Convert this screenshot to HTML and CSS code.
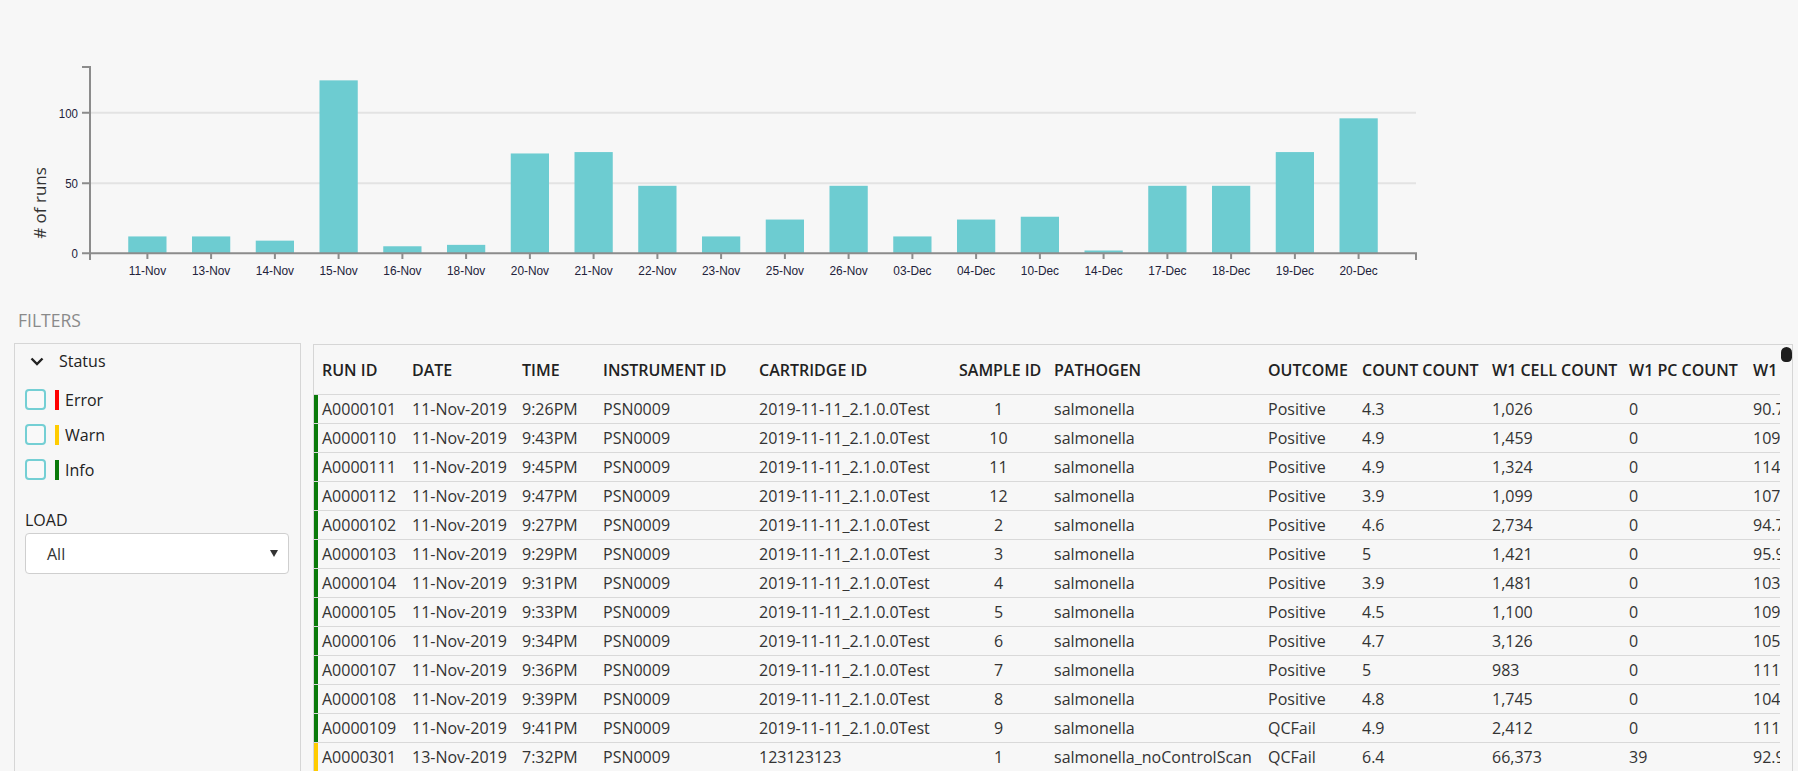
FILE: index.html
```html
<!DOCTYPE html>
<html>
<head>
<meta charset="utf-8">
<title>Runs</title>
<link rel="stylesheet" href="styles.css">
</head>
<body>
<div class="page">
  <svg class="chart" width="1798" height="300" viewBox="0 0 1798 300">
    <g class="grid">
      <line x1="90" y1="112.7" x2="1416" y2="112.7"/>
      <line x1="90" y1="183.3" x2="1416" y2="183.3"/>
    </g>
    <g class="bars">
      <rect x="128.25" y="236.43" width="38.25" height="16.87"/>
      <rect x="192" y="236.43" width="38.25" height="16.87"/>
      <rect x="255.75" y="240.65" width="38.25" height="12.65"/>
      <rect x="319.5" y="80.36" width="38.25" height="172.94"/>
      <rect x="383.25" y="246.27" width="38.25" height="7.03"/>
      <rect x="447" y="244.86" width="38.25" height="8.44"/>
      <rect x="510.75" y="153.47" width="38.25" height="99.83"/>
      <rect x="574.5" y="152.07" width="38.25" height="101.23"/>
      <rect x="638.25" y="185.81" width="38.25" height="67.49"/>
      <rect x="702" y="236.43" width="38.25" height="16.87"/>
      <rect x="765.75" y="219.56" width="38.25" height="33.74"/>
      <rect x="829.5" y="185.81" width="38.25" height="67.49"/>
      <rect x="893.25" y="236.43" width="38.25" height="16.87"/>
      <rect x="957" y="219.56" width="38.25" height="33.74"/>
      <rect x="1020.75" y="216.74" width="38.25" height="36.56"/>
      <rect x="1084.5" y="250.49" width="38.25" height="2.81"/>
      <rect x="1148.25" y="185.81" width="38.25" height="67.49"/>
      <rect x="1212" y="185.81" width="38.25" height="67.49"/>
      <rect x="1275.75" y="152.07" width="38.25" height="101.23"/>
      <rect x="1339.5" y="118.32" width="38.25" height="134.98"/>
    </g>
    <g class="axis">
      <path d="M82,67 H90 V253.3 H82"/>
      <path d="M82,112.7 H90 M82,183.3 H90"/>
      <path d="M90,260 V253.3 H1416 V260"/>
      <path d="M147.4,253.3 V259 M211.1,253.3 V259 M274.9,253.3 V259 M338.6,253.3 V259 M402.4,253.3 V259 M466.1,253.3 V259 M529.9,253.3 V259 M593.6,253.3 V259 M657.4,253.3 V259 M721.1,253.3 V259 M784.9,253.3 V259 M848.6,253.3 V259 M912.4,253.3 V259 M976.1,253.3 V259 M1039.9,253.3 V259 M1103.6,253.3 V259 M1167.4,253.3 V259 M1231.1,253.3 V259 M1294.9,253.3 V259 M1358.6,253.3 V259"/>
    </g>
    <g class="ylabels">
      <text transform="translate(78,117.5) scale(0.85,1)">100</text>
      <text transform="translate(78,188.1) scale(0.85,1)">50</text>
      <text transform="translate(78,258.1) scale(0.85,1)">0</text>
    </g>
    <g class="xlabels">
      <text transform="translate(147.4,274.8) scale(0.88,1)">11-Nov</text>
      <text transform="translate(211.1,274.8) scale(0.88,1)">13-Nov</text>
      <text transform="translate(274.9,274.8) scale(0.88,1)">14-Nov</text>
      <text transform="translate(338.6,274.8) scale(0.88,1)">15-Nov</text>
      <text transform="translate(402.4,274.8) scale(0.88,1)">16-Nov</text>
      <text transform="translate(466.1,274.8) scale(0.88,1)">18-Nov</text>
      <text transform="translate(529.9,274.8) scale(0.88,1)">20-Nov</text>
      <text transform="translate(593.6,274.8) scale(0.88,1)">21-Nov</text>
      <text transform="translate(657.4,274.8) scale(0.88,1)">22-Nov</text>
      <text transform="translate(721.1,274.8) scale(0.88,1)">23-Nov</text>
      <text transform="translate(784.9,274.8) scale(0.88,1)">25-Nov</text>
      <text transform="translate(848.6,274.8) scale(0.88,1)">26-Nov</text>
      <text transform="translate(912.4,274.8) scale(0.88,1)">03-Dec</text>
      <text transform="translate(976.1,274.8) scale(0.88,1)">04-Dec</text>
      <text transform="translate(1039.9,274.8) scale(0.88,1)">10-Dec</text>
      <text transform="translate(1103.6,274.8) scale(0.88,1)">14-Dec</text>
      <text transform="translate(1167.4,274.8) scale(0.88,1)">17-Dec</text>
      <text transform="translate(1231.1,274.8) scale(0.88,1)">18-Dec</text>
      <text transform="translate(1294.9,274.8) scale(0.88,1)">19-Dec</text>
      <text transform="translate(1358.6,274.8) scale(0.88,1)">20-Dec</text>
    </g>
    <text class="ytitle" transform="translate(45.5,203) rotate(-90)"># of runs</text>
  </svg>

  <div class="filters-title">FILTERS</div>

  <div class="main">
    <aside class="sidebar">
      <div class="group-head">
        <svg class="chevron" width="14" height="9" viewBox="0 0 14 9"><polyline points="1.5,1.5 7,7 12.5,1.5"/></svg>
        <span>Status</span>
      </div>
      <ul class="status-list">
        <li class="status-item"><span class="checkbox"></span><span class="swatch swatch-error"></span><span>Error</span></li>
        <li class="status-item"><span class="checkbox"></span><span class="swatch swatch-warn"></span><span>Warn</span></li>
        <li class="status-item"><span class="checkbox"></span><span class="swatch swatch-info"></span><span>Info</span></li>
      </ul>
      <div class="load-label">LOAD</div>
      <div class="select"><span>All</span><span class="caret"></span></div>
    </aside>

    <section class="table-panel">
      <div class="table-scroll">
        <table class="runs">
          <colgroup>
            <col class="c-run"><col class="c-date"><col class="c-time"><col class="c-inst"><col class="c-cart"><col class="c-sample"><col class="c-path"><col class="c-out"><col class="c-count"><col class="c-cell"><col class="c-pc"><col class="c-w1">
          </colgroup>
          <thead>
            <tr><th>RUN ID</th><th>DATE</th><th>TIME</th><th>INSTRUMENT ID</th><th>CARTRIDGE ID</th><th class="center">SAMPLE ID</th><th>PATHOGEN</th><th>OUTCOME</th><th>COUNT COUNT</th><th>W1 CELL COUNT</th><th>W1 PC COUNT</th><th>W1 MEAN INTENSITY</th></tr>
          </thead>
          <tbody>
            <tr class="info"><td>A0000101</td><td>11-Nov-2019</td><td>9:26PM</td><td>PSN0009</td><td>2019-11-11_2.1.0.0Test</td><td class="center">1</td><td>salmonella</td><td>Positive</td><td>4.3</td><td>1,026</td><td>0</td><td>90.75</td></tr>
            <tr class="info"><td>A0000110</td><td>11-Nov-2019</td><td>9:43PM</td><td>PSN0009</td><td>2019-11-11_2.1.0.0Test</td><td class="center">10</td><td>salmonella</td><td>Positive</td><td>4.9</td><td>1,459</td><td>0</td><td>109.32</td></tr>
            <tr class="info"><td>A0000111</td><td>11-Nov-2019</td><td>9:45PM</td><td>PSN0009</td><td>2019-11-11_2.1.0.0Test</td><td class="center">11</td><td>salmonella</td><td>Positive</td><td>4.9</td><td>1,324</td><td>0</td><td>114.08</td></tr>
            <tr class="info"><td>A0000112</td><td>11-Nov-2019</td><td>9:47PM</td><td>PSN0009</td><td>2019-11-11_2.1.0.0Test</td><td class="center">12</td><td>salmonella</td><td>Positive</td><td>3.9</td><td>1,099</td><td>0</td><td>107.21</td></tr>
            <tr class="info"><td>A0000102</td><td>11-Nov-2019</td><td>9:27PM</td><td>PSN0009</td><td>2019-11-11_2.1.0.0Test</td><td class="center">2</td><td>salmonella</td><td>Positive</td><td>4.6</td><td>2,734</td><td>0</td><td>94.71</td></tr>
            <tr class="info"><td>A0000103</td><td>11-Nov-2019</td><td>9:29PM</td><td>PSN0009</td><td>2019-11-11_2.1.0.0Test</td><td class="center">3</td><td>salmonella</td><td>Positive</td><td>5</td><td>1,421</td><td>0</td><td>95.93</td></tr>
            <tr class="info"><td>A0000104</td><td>11-Nov-2019</td><td>9:31PM</td><td>PSN0009</td><td>2019-11-11_2.1.0.0Test</td><td class="center">4</td><td>salmonella</td><td>Positive</td><td>3.9</td><td>1,481</td><td>0</td><td>103.44</td></tr>
            <tr class="info"><td>A0000105</td><td>11-Nov-2019</td><td>9:33PM</td><td>PSN0009</td><td>2019-11-11_2.1.0.0Test</td><td class="center">5</td><td>salmonella</td><td>Positive</td><td>4.5</td><td>1,100</td><td>0</td><td>109.16</td></tr>
            <tr class="info"><td>A0000106</td><td>11-Nov-2019</td><td>9:34PM</td><td>PSN0009</td><td>2019-11-11_2.1.0.0Test</td><td class="center">6</td><td>salmonella</td><td>Positive</td><td>4.7</td><td>3,126</td><td>0</td><td>105.62</td></tr>
            <tr class="info"><td>A0000107</td><td>11-Nov-2019</td><td>9:36PM</td><td>PSN0009</td><td>2019-11-11_2.1.0.0Test</td><td class="center">7</td><td>salmonella</td><td>Positive</td><td>5</td><td>983</td><td>0</td><td>111.37</td></tr>
            <tr class="info"><td>A0000108</td><td>11-Nov-2019</td><td>9:39PM</td><td>PSN0009</td><td>2019-11-11_2.1.0.0Test</td><td class="center">8</td><td>salmonella</td><td>Positive</td><td>4.8</td><td>1,745</td><td>0</td><td>104.55</td></tr>
            <tr class="info"><td>A0000109</td><td>11-Nov-2019</td><td>9:41PM</td><td>PSN0009</td><td>2019-11-11_2.1.0.0Test</td><td class="center">9</td><td>salmonella</td><td>QCFail</td><td>4.9</td><td>2,412</td><td>0</td><td>111.09</td></tr>
            <tr class="warn"><td>A0000301</td><td>13-Nov-2019</td><td>7:32PM</td><td>PSN0009</td><td>123123123</td><td class="center">1</td><td>salmonella_noControlScan</td><td>QCFail</td><td>6.4</td><td>66,373</td><td>39</td><td>92.95</td></tr>
            <tr class="warn"><td>A0000302</td><td>13-Nov-2019</td><td>7:35PM</td><td>PSN0009</td><td>123123123</td><td class="center">2</td><td>salmonella_noControlScan</td><td>QCFail</td><td>6.1</td><td>61,208</td><td>41</td><td>93.40</td></tr>
          </tbody>
        </table>
      </div>
      <div class="scroll-thumb"></div>
    </section>
  </div>
</div>
</body>
</html>
```

FILE: styles.css
```css
html, body {
  margin: 0;
  padding: 0;
  height: 771px;
  overflow: hidden;
  background: #f7f7f7;
}

body {
  font-family: "Open Sans", "Liberation Sans", sans-serif;
  font-size: 16px;
  color: #333;
}

.page {
  width: 1798px;
}

/* ---------- chart ---------- */
.chart {
  display: block;
}

.chart .grid line {
  stroke: #e3e3e3;
  stroke-width: 2;
}

.chart .bars rect {
  fill: #6dccd1;
}

.chart .axis path {
  fill: none;
  stroke: #8c8c8c;
  stroke-width: 2;
}

.chart text {
  font-family: "Liberation Sans", Arial, sans-serif;
  fill: #22223a;
}

.chart .ylabels text {
  font-size: 13.5px;
  text-anchor: end;
}

.chart .xlabels text {
  font-size: 13.5px;
  text-anchor: middle;
}

.chart .ytitle {
  font-family: "Open Sans", "Liberation Sans", sans-serif;
  font-size: 17px;
  text-anchor: middle;
  fill: #333;
}

/* ---------- filters title ---------- */
.filters-title {
  font-size: 17.5px;
  line-height: 24px;
  color: #8a8a8a;
  padding: 8px 0 11px 18px;
}

/* ---------- main area ---------- */
.main {
  display: flex;
  align-items: flex-start;
  gap: 12px;
  padding: 0 5px 0 14px;
}

.sidebar {
  flex: none;
  width: 287px;
  height: 480px;
  box-sizing: border-box;
  border: 1px solid #d6d6d6;
  padding: 0 11px 0 10px;
  color: #222;
}

.group-head {
  display: flex;
  align-items: center;
  height: 34px;
  padding-left: 5px;
}

.chevron {
  flex: none;
  margin-right: 15px;
}

.chevron polyline {
  fill: none;
  stroke: #222;
  stroke-width: 2.4;
}

.status-list {
  list-style: none;
  margin: 4px 0 0;
  padding: 0;
}

.status-item {
  display: flex;
  align-items: center;
  height: 35px;
}

.checkbox {
  flex: none;
  width: 17px;
  height: 17px;
  border: 2px solid #74cfd4;
  border-radius: 4px;
  background: #f9f9f9;
}

.swatch {
  flex: none;
  width: 4px;
  height: 20px;
  margin: 0 6px 0 9px;
}

.swatch-error { background: #ff0000; }
.swatch-warn { background: #ffcc00; }
.swatch-info { background: #0a7a0a; }

.load-label {
  margin-top: 22px;
  line-height: 22px;
}

.select {
  margin-top: 2px;
  height: 39px;
  display: flex;
  align-items: center;
  border: 1px solid #cfcfcf;
  border-radius: 4px;
  background: #fff;
  padding: 0 10px 0 21px;
  color: #333;
}

.caret {
  margin-left: auto;
  width: 0;
  height: 0;
  border-left: 4px solid transparent;
  border-right: 4px solid transparent;
  border-top: 7px solid #333;
}

/* ---------- table ---------- */
.table-panel {
  flex: 1;
  position: relative;
  height: 440px;
  margin-top: 1px;
  border: 1px solid #d6d6d6;
  padding-right: 12px;
  overflow: hidden;
}

.table-scroll {
  overflow: hidden;
  height: 100%;
}

.runs {
  table-layout: fixed;
  border-collapse: separate;
  border-spacing: 0;
  width: 1591px;
}

.c-run { width: 90px; }
.c-date { width: 110px; }
.c-time { width: 81px; }
.c-inst { width: 156px; }
.c-cart { width: 200px; }
.c-sample { width: 95px; }
.c-path { width: 214px; }
.c-out { width: 94px; }
.c-count { width: 130px; }
.c-cell { width: 137px; }
.c-pc { width: 124px; }
.c-w1 { width: 160px; }

.runs th,
.runs td {
  padding: 0 8px;
  text-align: left;
  white-space: nowrap;
  overflow: hidden;
  border-bottom: 1px solid #d9d9d9;
}

.runs th {
  height: 49px;
  font-weight: 600;
  color: #222;
}

.runs td {
  height: 28px;
  color: #333;
}

.runs .center {
  text-align: center;
}

.runs tr.info td:first-child {
  box-shadow: inset 4px 0 0 #0a7a0a;
}

.runs tr.warn td:first-child {
  box-shadow: inset 4px 0 0 #ffcc00;
}

.scroll-thumb {
  position: absolute;
  top: 2px;
  right: 0;
  width: 11px;
  height: 15px;
  border-radius: 6px 6px 5px 5px;
  background: #1e1e1e;
}
```
